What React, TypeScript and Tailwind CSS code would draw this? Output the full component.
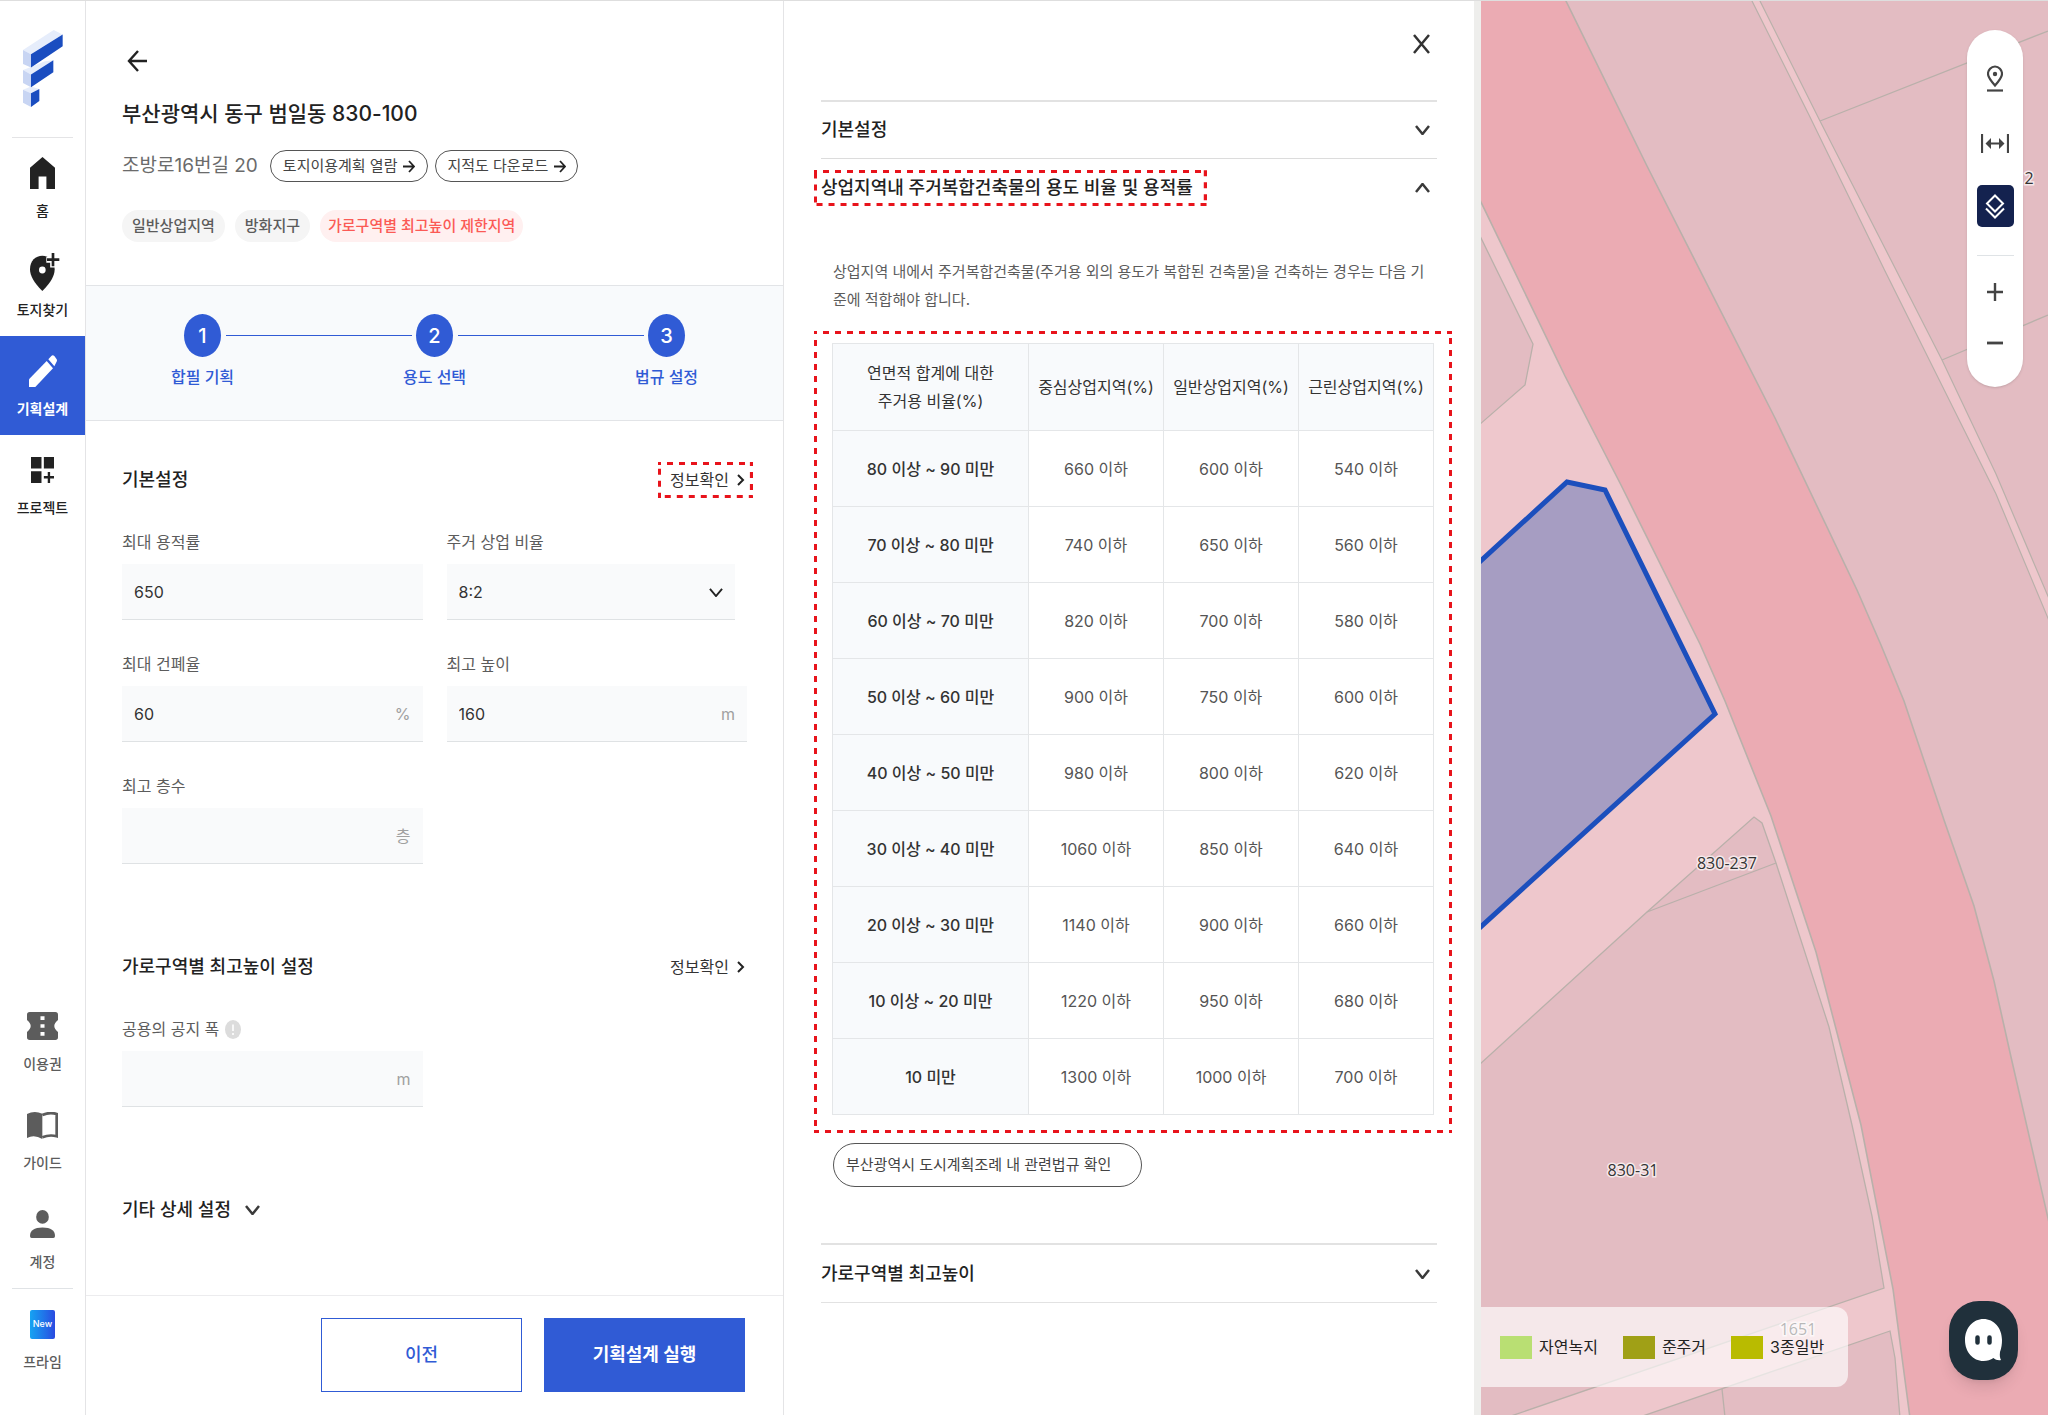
import React, { useState } from 'react';

interface NavItem {
  label: string;
  icon: React.ReactNode;
  active?: boolean;
  muted?: boolean;
}

const topItems: NavItem[] = [
  {
    label: '홈',
    icon: (
      <svg className="h-8 w-[25px]" viewBox="0 0 16 18" preserveAspectRatio="none" fill="currentColor">
        <path d="M0 18V6l8-6 8 6v12h-5.500v-7h-5v7z" />
      </svg>
    ),
  },
  {
    label: '토지찾기',
    icon: (
      <svg className="ml-1 h-[38px] w-[30px]" viewBox="0 0 90 110" preserveAspectRatio="none">
        <path d="M37 110C12 86 0 66 0 47 0 22 17 8 37 8s37 14 37 39c0 19-12 39-37 63z" fill="currentColor" />
        <circle cx="37" cy="49" r="10" fill="#fff" />
        <path d="M69 -2V42M49 20H90" stroke="#fff" strokeWidth="17" />
        <path d="M69 0V38M51 19H88" stroke="currentColor" strokeWidth="8" />
      </svg>
    ),
  },
  {
    label: '기획설계',
    active: true,
    icon: (
      <svg className="h-8 w-7" viewBox="0 0 84 92" preserveAspectRatio="none" fill="currentColor">
        <path d="M0 92V70L53 17 72 38 19 92z" />
        <path d="M58 12L67 3q4-4 9 0l6 8q4 5 0 10l-6 11z" />
      </svg>
    ),
  },
  {
    label: '프로젝트',
    icon: (
      <svg className="h-[26px] w-[23px]" viewBox="0 0 68 75" preserveAspectRatio="none" fill="currentColor">
        <path d="M0 0h31v33H0zM38 0h30v33H38zM0 41h31v34H0z" />
        <path d="M49.500 43h7v12H68v7H56.500v13h-7V62H38v-7h11.500z" />
      </svg>
    ),
  },
];

const bottomItems: NavItem[] = [
  {
    label: '이용권',
    muted: true,
    icon: (
      <svg className="h-7 w-[31px]" viewBox="0 0 92 85" preserveAspectRatio="none" fill="currentColor">
        <path
          fillRule="evenodd"
          d="M8 0h76a8 8 0 0 1 8 8v16c-7 6-11 12-11 18.500S85 55 92 61v16a8 8 0 0 1-8 8H8a8 8 0 0 1-8-8V61c7-6 11-12 11-18.500S7 30 0 24V8a8 8 0 0 1 8-8zM40 13v11h12V13zM40 37v11h12V37zM40 61v11h12V61z"
        />
      </svg>
    ),
  },
  {
    label: '가이드',
    muted: true,
    icon: (
      <svg className="h-[27px] w-[31px]" viewBox="0 0 93 80" preserveAspectRatio="none">
        <path d="M0 6Q22-5 46 5v75Q22 66 0 77z" fill="currentColor" />
        <path d="M46 9Q68-1 89 6v66q-21-6-43 3" fill="none" stroke="currentColor" strokeWidth="8" />
      </svg>
    ),
  },
  {
    label: '계정',
    muted: true,
    icon: (
      <svg className="h-7 w-[25px]" viewBox="0 0 75 85" preserveAspectRatio="none" fill="currentColor">
        <ellipse cx="37.500" cy="21" rx="19" ry="21" />
        <path d="M0 79q0-26 37.500-26T75 79q0 6-5 6H5q-5 0-5-6z" />
      </svg>
    ),
  },
];

const tableHead = ['중심상업지역(%)', '일반상업지역(%)', '근린상업지역(%)'];

const tableRows = [
  { range: '80 이상 ~ 90 미만', values: [660, 600, 540] },
  { range: '70 이상 ~ 80 미만', values: [740, 650, 560] },
  { range: '60 이상 ~ 70 미만', values: [820, 700, 580] },
  { range: '50 이상 ~ 60 미만', values: [900, 750, 600] },
  { range: '40 이상 ~ 50 미만', values: [980, 800, 620] },
  { range: '30 이상 ~ 40 미만', values: [1060, 850, 640] },
  { range: '20 이상 ~ 30 미만', values: [1140, 900, 660] },
  { range: '10 이상 ~ 20 미만', values: [1220, 950, 680] },
  { range: '10 미만', values: [1300, 1000, 700] },
];

const steps = ['합필 기획', '용도 선택', '법규 설정'];

const Logo = () => (
  <svg className="h-[77px] w-10" viewBox="0 0 120 222" preserveAspectRatio="none">
    <path d="M0 58L92 0l27 13L24 70zM0 115l24-8 42-17 25-3-67 41zM0 172l24-9 25 7-25 12z" fill="#e6edfb" />
    <path d="M0 58l24 12v38L0 98zM0 115l24 13v37L0 153zM0 172l24 10v40L0 210z" fill="#c8d5f3" />
    <path d="M24 70l95-57v34L24 108zM24 128l67-41v35l-67 43zM24 182l25-12v35l-25 17z" fill="#1a4dc0" />
  </svg>
);

const Chevron: React.FC<{ className?: string; up?: boolean; strokeWidth?: number }> = ({
  className = 'h-[10px] w-[15px] text-[#3a3a3a]',
  up,
  strokeWidth = 2.5,
}) => (
  <svg className={className} viewBox="0 0 15 10" preserveAspectRatio="none" fill="none">
    <path d={up ? 'M1 9l6.500-8L14 9' : 'M1 1l6.500 8L14 1'} stroke="currentColor" strokeWidth={strokeWidth} />
  </svg>
);

const SmallArrow = () => (
  <svg className="h-[13px] w-3" viewBox="0 0 12 13" fill="none" stroke="#222" strokeWidth="1.800">
    <path d="M0 6.500h11M6 1l5 5.500L6 12" />
  </svg>
);

// red dashed marker drawn around its relative parent
const DashedFrame = () => (
  <svg className="pointer-events-none absolute inset-0 h-full w-full">
    <rect width="100%" height="100%" fill="none" stroke="#e8131b" strokeWidth="6" strokeDasharray="6 6" strokeDashoffset="3" />
  </svg>
);

const NavButton: React.FC<{ item: NavItem }> = ({ item }) => (
  <button
    className={`flex h-[99px] w-full flex-col items-center pt-4 text-sm leading-5 ${
      item.active ? 'bg-[#305bd5] font-bold text-white' : item.muted ? 'font-medium text-[#5c5c5c]' : 'font-medium text-[#222]'
    }`}
  >
    <span className="mb-[9px] flex h-[38px] items-center justify-center">{item.icon}</span>
    {item.label}
  </button>
);

const Sidebar = () => (
  <nav className="flex w-[86px] shrink-0 flex-col border-r border-[#e4e4e6] bg-white">
    <a href="#" aria-label="홈으로" className="mx-3 flex h-[137px] justify-center border-b border-[#e4e4e6] pt-[29px]">
      <Logo />
    </a>
    {topItems.map(item => (
      <NavButton key={item.label} item={item} />
    ))}
    <div className="mt-auto pb-[27px]">
      {bottomItems.map(item => (
        <NavButton key={item.label} item={item} />
      ))}
      <hr className="mx-3 border-[#e0e3e6]" />
      <NavButton
        item={{
          label: '프라임',
          muted: true,
          icon: (
            <span className="flex h-[29px] w-[25px] items-center justify-center rounded-xs bg-linear-to-r from-[#16a3f2] to-[#2a49e0] text-[9px] text-white">
              New
            </span>
          ),
        }}
      />
    </div>
  </nav>
);

interface FieldProps {
  id: string;
  label: string;
  value?: string;
  unit?: string;
  hint?: boolean;
}

const Field: React.FC<FieldProps> = ({ id, label, value = '', unit, hint }) => (
  <div>
    <div className="mb-[10px] flex h-6 items-center gap-[6px]">
      <label htmlFor={id} className="text-base leading-6 text-[#5c5c5c]">{label}</label>
      {hint && (
        <svg className="h-[19px] w-4" viewBox="0 0 16 19">
          <ellipse cx="8" cy="9.500" rx="8" ry="9.500" fill="#dcdcdc" />
          <path d="M8 4.500v6.500M8 13v2" stroke="#fff" strokeWidth="1.600" />
        </svg>
      )}
    </div>
    <div className="flex h-14 items-center border-b border-[#dfe2e4] bg-[#f9fafb] px-3">
      <input id={id} defaultValue={value} className="min-w-0 flex-1 bg-transparent text-base text-[#333] outline-none" />
      {unit && <span className="text-base text-[#a0a0a0]">{unit}</span>}
    </div>
  </div>
);

const InfoButton: React.FC<{ marked?: boolean }> = ({ marked }) => (
  <button type="button" className="relative -mr-[6px] flex h-9 items-center gap-2 pr-2 pl-3 text-base text-[#333]">
    정보확인
    <svg className="h-3 w-2" viewBox="0 0 8 12" fill="none">
      <path d="M1 1l5 5-5 5" stroke="#222" strokeWidth="2" />
    </svg>
    {marked && <DashedFrame />}
  </button>
);

const SettingsPanel = () => {
  const [ratio, setRatio] = useState('8:2');

  return (
    <section className="flex w-[698px] shrink-0 flex-col border-r border-[#e4e4e6] bg-white">
      <header className="h-[284px] px-9 pt-12">
        <button aria-label="뒤로" className="block pl-[5px]">
          <svg className="h-6 w-5" viewBox="0 0 20 24" fill="none" stroke="#222" strokeWidth="2.400">
            <path d="M20 12H2M11 2L2 12l9 10" />
          </svg>
        </button>
        <h1 className="mt-[25px] text-[21px] leading-8 font-medium text-[#222]">부산광역시 동구 범일동 830-100</h1>
        <div className="mt-5 flex h-8 items-center">
          <span className="mr-3 text-[19px] text-[#6b6b6b]">조방로16번길 20</span>
          <button className="mr-[7px] flex h-8 items-center gap-[6px] rounded-2xl border border-[#555] px-3 text-[15px] text-[#444]">
            토지이용계획 열람 <SmallArrow />
          </button>
          <button className="flex h-8 items-center gap-[6px] rounded-2xl border border-[#555] px-[11px] text-[15px] text-[#444]">
            지적도 다운로드 <SmallArrow />
          </button>
        </div>
        <div className="mt-7 flex gap-[10px] text-[15px] leading-8 font-medium text-[#5c5c5c]">
          <span className="rounded-full bg-[#f5f5f5] px-[10px]">일반상업지역</span>
          <span className="rounded-full bg-[#f5f5f5] px-[10px]">방화지구</span>
          <span className="rounded-full bg-[#fff0f0] px-2 text-[#fb5a55]">가로구역별 최고높이 제한지역</span>
        </div>
      </header>

      <ol className="flex h-[136px] justify-center border-y border-[#e2e4e7] bg-[#f8fafc] pt-7">
        {steps.map((step, i) => (
          <React.Fragment key={step}>
            {i > 0 && <li aria-hidden="true" className="-mx-[13px] mt-[21px] h-px w-[186px] bg-[#305bd5]" />}
            <li className="flex w-[72px] flex-col items-center text-base leading-6 font-medium text-[#305bd5]">
              <span className="mb-2 flex h-[43px] w-[37px] items-center justify-center rounded-[50%] bg-[#305bd5] text-xl text-white">
                {i + 1}
              </span>
              {step}
            </li>
          </React.Fragment>
        ))}
      </ol>

      <form className="flex flex-1 flex-col" onSubmit={e => e.preventDefault()}>
        <div className="px-9 pt-[41px]">
          <div className="flex h-9 items-center justify-between">
            <h2 className="text-lg font-medium text-[#222]">기본설정</h2>
            <InfoButton marked />
          </div>
          <div className="mt-8 grid grid-cols-2 gap-x-6 gap-y-8">
            <Field id="max-far" label="최대 용적률" value="650" />
            <div>
              <label htmlFor="ratio" className="mb-[10px] block text-base leading-6 text-[#5c5c5c]">주거 상업 비율</label>
              <div className="relative mr-3">
                <select
                  id="ratio"
                  value={ratio}
                  onChange={e => setRatio(e.target.value)}
                  className="h-14 w-full appearance-none border-b border-[#dfe2e4] bg-[#f9fafb] px-3 text-base text-[#333]"
                >
                  <option>8:2</option>
                  <option>7:3</option>
                  <option>6:4</option>
                </select>
                <span className="pointer-events-none absolute top-6 right-3 text-[#222]">
                  <Chevron className="h-[9px] w-[14px]" strokeWidth={2} />
                </span>
              </div>
            </div>
            <Field id="max-bcr" label="최대 건폐율" value="60" unit="%" />
            <Field id="max-height" label="최고 높이" value="160" unit="m" />
            <Field id="max-floor" label="최고 층수" unit="층" />
          </div>

          <div className="mt-[85px] flex h-9 items-center justify-between">
            <h2 className="text-lg font-medium text-[#222]">가로구역별 최고높이 설정</h2>
            <InfoButton />
          </div>
          <div className="mt-8 grid grid-cols-2 gap-x-6">
            <Field id="public-width" label="공용의 공지 폭" unit="m" hint />
          </div>

          <button type="button" className="mt-[89px] flex items-center gap-[14px] text-lg leading-7 font-medium text-[#222]">
            기타 상세 설정 <Chevron />
          </button>
        </div>

        <footer className="mt-auto flex justify-end gap-[22px] border-t border-[#ececee] pt-[22px] pr-[38px] pb-[23px]">
          <button type="button" className="h-[74px] w-[201px] border border-[#305bd5] text-lg font-medium text-[#305bd5]">
            이전
          </button>
          <button type="submit" className="h-[74px] w-[201px] bg-[#305bd5] text-lg font-bold text-white">
            기획설계 실행
          </button>
        </footer>
      </form>
    </section>
  );
};

const InfoPanel = () => (
  <aside className="w-[697px] shrink-0 border-r-[7px] border-[#eeeeec] bg-white px-[37px]">
    <div className="flex h-[99px] justify-end pt-[33px] pr-[7px]">
      <button aria-label="닫기" className="h-5 w-[17px]">
        <svg className="h-5 w-[17px]" viewBox="0 0 17 20" fill="none" stroke="#333" strokeWidth="2.500">
          <path d="M1 1l15 18M16 1L1 19" />
        </svg>
      </button>
    </div>

    <button className="flex h-[58px] w-full items-center justify-between border-t-2 border-[#e2e2e2] pr-[7px] text-lg font-medium text-[#222]">
      기본설정 <Chevron />
    </button>
    <button
      aria-expanded="true"
      className="flex h-[59px] w-full items-center justify-between border-t border-[#dcdcdc] pr-[7px] text-lg font-medium text-[#222]"
    >
      <span className="relative -ml-[7px] flex h-9 items-center pr-[14px] pl-[7px] whitespace-nowrap">
        상업지역내 주거복합건축물의 용도 비율 및 용적률
        <DashedFrame />
      </span>
      <Chevron up />
    </button>

    <div className="pt-[41px]">
      <p className="pl-3 text-[15px] leading-7 text-[#5c5c5c]">
        상업지역 내에서 주거복합건축물(주거용 외의 용도가 복합된 건축물)을 건축하는 경우는 다음 기
        <br />
        준에 적합해야 합니다.
      </p>
      <div className="relative -mr-[15px] -ml-[7px] mt-[17px] px-[18px] pt-3 pb-[18px]">
        <table className="w-full table-fixed border-collapse text-center text-base text-[#555]">
          <thead>
            <tr className="h-[87px] bg-[#f8fafc] text-[#333]">
              <th className="w-[196px] border border-[#e4e6e8] leading-7 font-normal">
                연면적 합계에 대한
                <br />
                주거용 비율(%)
              </th>
              {tableHead.map(head => (
                <th key={head} className="border border-[#e4e6e8] font-normal">{head}</th>
              ))}
            </tr>
          </thead>
          <tbody>
            {tableRows.map(row => (
              <tr key={row.range} className="h-[76px]">
                <th className="border border-[#e4e6e8] bg-[#f8fafc] font-medium text-[#333]">{row.range}</th>
                {row.values.map(value => (
                  <td key={value} className="border border-[#e4e6e8]">{value} 이하</td>
                ))}
              </tr>
            ))}
          </tbody>
        </table>
        <DashedFrame />
      </div>
      <button className="mt-[10px] ml-3 flex h-[44px] items-center rounded-[22px] border border-[#555] pr-[30px] pl-3 text-[15px] text-[#444]">
        부산광역시 도시계획조례 내 관련법규 확인
      </button>
    </div>

    <button className="mt-14 flex h-[60px] w-full items-center justify-between border-t-2 border-b border-[#e2e2e2] pr-[7px] text-lg font-medium text-[#222]">
      가로구역별 최고높이 <Chevron />
    </button>
  </aside>
);

const ParcelMap = () => (
  <svg className="absolute inset-0 h-full w-full" viewBox="0 0 567 1415" preserveAspectRatio="xMinYMin slice">
    <rect width="567" height="1415" fill="#e3bcc2" />
    {/* side street west of the main road */}
    <path d="M0 190L84 375 140 484 219 643 244 700 290 815 335 951 380 1124 412 1288 429 1415H0z" fill="#eec7cc" />
    <g fill="#e3bcc2" stroke="#b9b0aa" strokeWidth="1.300">
      <path d="M-2 233L52 343 44 384-2 424z" />
      <path d="M-2 1064L166 911 273 816 281 822 295 862 348 1026 371 1124 391 1215 403 1287 30 1415 20 1420H-2z" />
      <path d="M166 911L295 862" fill="none" />
      <path d="M150 1419L409 1330 414 1357 419 1417z" />
      <path d="M241 1388L244 1416" fill="none" />
    </g>
    {/* main road */}
    <path
      d="M-2-2H84L166 165 294 417 376 589 400 644 423 700 463 819 493 905 513 980 530 1056 569 1226V1417H429L412 1288 380 1124 335 951 290 815 244 700 219 643 140 484 84 375-2 197z"
      fill="#ebabb3"
      stroke="#b9b0aa"
      strokeWidth="1.600"
    />
    {/* lane on the east side */}
    <path d="M270-2L328 114 403 268 515 493 569 622V600L515 473 461 359 339 120 278-2z" fill="#eec7cc" stroke="#b9b0aa" strokeWidth="1.200" />
    <path d="M339 120L567 30M461 359L567 314" stroke="#b9b0aa" strokeWidth="1.300" />
    {/* selected parcel */}
    <path d="M-6 565L86 481 124 489 234 713-6 931z" fill="#a69dc2" stroke="#1c4fbd" strokeWidth="5" />
    <g
      className="font-['Open_Sans',sans-serif] text-[16px]"
      textAnchor="middle"
      fill="#333"
      stroke="#f6e9eb"
      strokeWidth="3"
      paintOrder="stroke"
    >
      <text x="246" y="868">830-237</text>
      <text x="152" y="1175">830-31</text>
      <text x="317" y="1334">1651</text>
      <text x="548" y="183">2</text>
    </g>
  </svg>
);

const MapArea = () => (
  <main className="relative min-w-0 flex-1 overflow-hidden">
    <ParcelMap />

    <div className="absolute top-[29px] right-[25px] flex w-14 flex-col items-center rounded-full bg-white pt-[31px] pb-[26px] text-[#444] shadow-sm">
      <button aria-label="위치" className="flex h-9 w-9 items-center justify-center">
        <svg className="h-7 w-4" viewBox="0 0 16 28" fill="none" stroke="currentColor" strokeWidth="2.200">
          <path d="M8 20.500C4 16 1 12.500 1 9a7 7.500 0 0 1 14 0c0 3.500-3 7-7 11.500z" />
          <circle cx="8" cy="9" r="2.200" fill="currentColor" stroke="none" />
          <path d="M0 25.500h16" />
        </svg>
      </button>
      <button aria-label="거리 측정" className="mt-7 flex h-9 w-9 items-center justify-center">
        <svg className="h-[19px] w-7" viewBox="0 0 28 19" fill="none" stroke="currentColor" strokeWidth="2.200">
          <path d="M1 0v19M27 0v19M7 9.500h14" />
          <path d="M10 4v11L4.500 9.500zM18 4v11l5.500-5.500z" fill="currentColor" stroke="none" />
        </svg>
      </button>
      <button aria-label="레이어" className="mt-6 flex h-[42px] w-[37px] items-center justify-center rounded-[5px] bg-[#14224f] text-white">
        <svg className="h-[25px] w-5" viewBox="0 0 20 25" fill="none" stroke="currentColor" strokeWidth="2">
          <path d="M10 1.500l8 8-8 8-8-8z" />
          <path d="M1 14.500l9 9 9-9" />
        </svg>
      </button>
      <hr className="mt-7 w-[37px] border-[#dfe3e6]" />
      <button aria-label="확대" className="mt-[18px] flex h-9 w-9 items-center justify-center">
        <svg className="h-[18px] w-4" viewBox="0 0 16 18" stroke="currentColor" strokeWidth="2.400">
          <path d="M8 0v18M0 9h16" />
        </svg>
      </button>
      <button aria-label="축소" className="mt-[15px] flex h-9 w-9 items-center justify-center">
        <svg className="h-[18px] w-4" viewBox="0 0 16 18" stroke="currentColor" strokeWidth="2.800">
          <path d="M0 9h16" />
        </svg>
      </button>
    </div>

    <ul className="absolute bottom-7 left-0 flex h-20 items-center gap-[25px] rounded-r-xl bg-white/65 pr-6 pl-[19px] text-base text-[#222]">
      <li className="flex items-center gap-[7px]">
        <span className="h-[23px] w-8 bg-[#b9df73]" />자연녹지
      </li>
      <li className="flex items-center gap-[7px]">
        <span className="h-[23px] w-8 bg-[#a0a016]" />준주거
      </li>
      <li className="flex items-center gap-[7px]">
        <span className="h-[23px] w-8 bg-[#b9bb00]" />3종일반
      </li>
    </ul>

    <button
      aria-label="채팅 상담"
      className="absolute right-[30px] bottom-[35px] flex h-[79px] w-[69px] items-center justify-center rounded-[30px] bg-[#20303b] shadow-lg"
    >
      <svg className="h-[43px] w-[37px]" viewBox="0 0 37 43">
        <path d="M18.500 0C8 0 0 9 0 21s8 21 18.500 21c4 0 7-1 10-3 2 2 5 2.500 7.500 2-1-2-1.500-4-1-8 1.500-4 2-8 2-12C37 9 29 0 18.500 0z" fill="#fff" />
        <path d="M12.500 18.500v5M24.500 18.500v5" stroke="#20303b" strokeWidth="4.500" strokeLinecap="round" />
      </svg>
    </button>
  </main>
);

const App = () => (
  <div className="flex min-h-screen border-t border-[#dedede] bg-white font-[Inter,'Noto_Sans_CJK_KR',sans-serif]">
    <Sidebar />
    <SettingsPanel />
    <InfoPanel />
    <MapArea />
  </div>
);

export default App;
